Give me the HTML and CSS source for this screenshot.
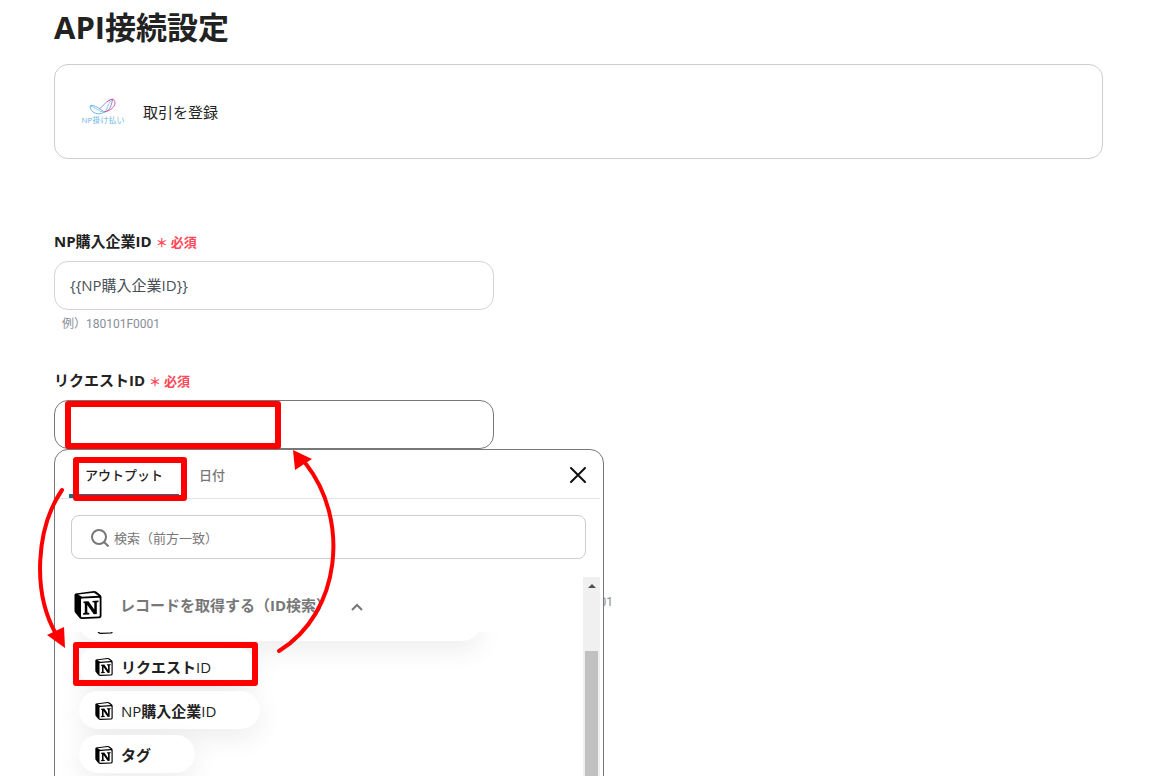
FILE: index.html
```html
<!DOCTYPE html>
<html lang="ja">
<head>
    <meta charset="UTF-8">
    <meta name="viewport" content="width=device-width, initial-scale=1.0">
    <title>API接続設定</title>
    <link rel="stylesheet" href="styles.css">
</head>
<body>
    <svg class="symbols" aria-hidden="true">
        <symbol id="notion" viewBox="0 0 28 30">
            <path d="M1.5 3.5 L20 1 Q21.500 1 22.500 1.700 L26.500 5 Q27.500 6 27.500 7 V26 Q27.500 28 25.500 28.200 L8 29 Q6.500 29 5.500 28 L1.500 23 Q.5 22 .5 20.500 V5 Q.5 4 1.500 3.500 Z"/>
            <path fill="#fff" d="M4 4.500 L20 2.700 L24.500 5.700 L8 6.800 Z M7 9.500 Q7 8.700 8 8.600 L24.800 7.700 Q25.700 7.700 25.700 8.600 V25.400 Q25.700 26.400 24.700 26.500 L8 27.200 Q7 27.200 7 26.200 Z"/>
            <path d="M9.500 11.500 L14.500 11.200 L20.300 19.500 V12.600 L18.500 12.300 V10.900 L24.500 10.600 V12 L22.800 12.500 V24 L19.800 24.300 L13.300 15 V22.500 L15.300 23 V24.400 L9 24.800 V23.400 L10.800 22.800 V13.300 L9.500 13 Z"/>
        </symbol>
    </svg>

    <main class="page">
        <h1>API接続設定</h1>

        <section class="action-card">
            <div class="logo">
                <svg class="logo-mark" viewBox="0 0 28 17" aria-hidden="true">
                    <g fill="none" stroke-width="1">
                        <path stroke="#6db3e3" d="M1 8 C3 6 9 9 15 14 C10 18 1 15 1 8 Z"/>
                        <path stroke="#8bcdf0" d="M1 8 C7 9 9 14 15 14 C19 13 17 6 24 1"/>
                        <path stroke="#9a8bd0" d="M10 11 C15 8 17 2 24 1 C22 6 22 13 15 14"/>
                        <path stroke="#dc5aa5" d="M18 4 C21 1 26 0 26 5 C26 9 21 13 15 14"/>
                    </g>
                </svg>
                <span class="logo-text">NP掛け払い</span>
            </div>
            <p>取引を登録</p>
        </section>

        <form class="fields">
            <div class="field">
                <label for="companyId">NP購入企業ID <span class="required"><span class="star">＊</span>必須</span></label>
                <input type="text" class="text-input" id="companyId" value="{{NP購入企業ID}}">
                <p class="hint">例）180101F0001</p>
            </div>

            <div class="field">
                <label for="requestId">リクエストID <span class="required"><span class="star">＊</span>必須</span></label>
                <div class="picker">
                    <input type="text" class="text-input focused" id="requestId">

                    <div class="panel">
                        <div class="panel-head">
                            <button type="button" class="tab active">アウトプット</button>
                            <button type="button" class="tab">日付</button>
                            <button type="button" class="close" aria-label="閉じる">
                                <svg viewBox="0 0 16 16" aria-hidden="true"><path d="M1 1 L15 15 M15 1 L1 15"/></svg>
                            </button>
                        </div>

                        <div class="search">
                            <svg viewBox="0 0 18 18" aria-hidden="true"><circle cx="8" cy="8" r="7"/><path d="M13 13 L17.500 17.500"/></svg>
                            <input type="search" aria-label="検索" placeholder="検索（前方一致）">
                        </div>

                        <div class="results">
                            <div class="list">
                                <button type="button" class="group">
                                    <svg class="group-icon" aria-hidden="true"><use href="#notion"/></svg>
                                    レコードを取得する（ID検索）
                                    <svg class="chevron" viewBox="0 0 12 8" aria-hidden="true"><path d="M1 7 L6 2 L11 7"/></svg>
                                </button>
                                <div class="items">
                                    <div class="item item-wide"><svg aria-hidden="true"><use href="#notion"/></svg></div>
                                    <button type="button" class="item"><svg aria-hidden="true"><use href="#notion"/></svg><span><b>リクエスト</b>ID</span></button>
                                    <button type="button" class="item"><svg aria-hidden="true"><use href="#notion"/></svg><span>NP<b>購入企業</b>ID</span></button>
                                    <button type="button" class="item"><svg aria-hidden="true"><use href="#notion"/></svg><span><b>タグ</b></span></button>
                                </div>
                            </div>
                            <div class="scrollbar">
                                <div class="scroll-up"></div>
                                <div class="scroll-thumb"></div>
                            </div>
                        </div>
                    </div>
                </div>
            </div>

            <div class="field field-behind">
                <p class="hint">01</p>
            </div>
        </form>

        <svg class="marks" width="400" height="776" aria-hidden="true">
            <g class="mark-line">
                <rect x="68" y="404" width="210" height="42"/>
                <rect x="76" y="460" width="108" height="38"/>
                <rect x="76" y="645" width="179" height="38"/>
            </g>
            <g class="mark-curve">
                <path d="M62 490 C36 528 32 592 56 634"/>
                <path d="M279 651 C341 613 350 520 306 464"/>
            </g>
            <path class="mark-head" d="M65 648 L47 635 L64 627 Z M293 450 L312 459 L295 470 Z"/>
        </svg>
    </main>
</body>
</html>
```
FILE: styles.css
```css
* {
    margin: 0;
    padding: 0;
    box-sizing: border-box;
}

body, button, input {
    font-family: "Open Sans", "Noto Sans CJK JP", sans-serif;
    font-size: 15px;
    color: #222;
}

button {
    border: none;
    background: none;
    cursor: pointer;
}

.symbols {
    display: none;
}

.page {
    position: relative;
    height: 100vh;
    padding: 8px 66px 0 54px;
    overflow: hidden;
}

h1 {
    font-size: 31px;
    line-height: 38px;
    margin-bottom: 18px;
}

/* selected action */
.action-card {
    display: flex;
    align-items: center;
    gap: 16px;
    height: 95px;
    padding: 0 24px;
    border: 1px solid #ccc;
    border-radius: 14px;
}

.logo {
    display: flex;
    flex-direction: column;
    align-items: center;
    width: 48px;
}

.logo-mark {
    width: 28px;
    height: 17px;
}

.logo-text {
    font-size: 8px;
    line-height: 10px;
    color: #6cb7e8;
    white-space: nowrap;
}

/* form */
.fields {
    display: flex;
    flex-direction: column;
    gap: 36px;
    margin-top: 71px;
}

.field {
    min-height: 103px;
}

label {
    display: flex;
    align-items: center;
    gap: 4px;
    height: 20px;
    margin-bottom: 11px;
    font-weight: bold;
}

.required {
    display: flex;
    align-items: center;
    gap: 3px;
    padding-top: 2px;
    font-size: 13px;
    color: #ff4757;
}

.star {
    padding-top: 3px;
    font-size: 12px;
}

.text-input {
    display: block;
    width: 440px;
    height: 49px;
    padding: 0 15px 2px;
    border: 1px solid #ced4da;
    border-radius: 14px;
    background: #fff;
    color: #495057;
    outline: none;
}

.text-input.focused {
    border-color: #777;
}

.hint {
    margin-top: 5px;
    padding-left: 8px;
    font-family: Roboto, "Noto Sans CJK JP", sans-serif;
    font-size: 12px;
    line-height: 18px;
    color: #868e96;
}

.field-behind {
    display: flex;
    align-items: flex-end;
    justify-content: flex-end;
    width: 559px;
}

/* output picker */
.picker {
    position: relative;
}

.panel {
    position: absolute;
    top: 100%;
    left: 0;
    z-index: 1;
    width: 550px;
    padding-right: 3px;
    border: 1px solid #777;
    border-radius: 14px;
    background: #fff;
}

.panel-head {
    display: flex;
    gap: 4px;
    height: 49px;
    padding: 0 14px;
    border-bottom: 1px solid #e3e3e3;
}

.tab {
    padding: 5px 16px 0;
    font-size: 13px;
    font-weight: 500;
    color: #777;
    border-bottom: 4px solid transparent;
}

.tab.active {
    color: #222;
    border-bottom-color: #12708a;
    border-radius: 4px 4px 0 0;
}

.close {
    margin-left: auto;
    padding-top: 6px;
}

.close svg {
    width: 16px;
    height: 16px;
    fill: none;
    stroke: #111;
    stroke-width: 2;
    stroke-linecap: round;
}

.search {
    display: flex;
    align-items: center;
    gap: 5px;
    height: 44px;
    margin: 16px 14px 18px 16px;
    padding: 2px 19px 0;
    border: 1px solid #ccc;
    border-radius: 8px;
}

.search svg {
    width: 18px;
    height: 18px;
    fill: none;
    stroke: #777;
    stroke-width: 2;
}

.search input {
    flex: 1;
    border: none;
    outline: none;
    font-size: 13px;
}

.search input::placeholder {
    color: #777;
}

.results {
    display: flex;
    height: 260px;
}

.list {
    flex: 1;
    overflow: hidden;
}

.group {
    position: relative;
    z-index: 1;
    display: flex;
    align-items: center;
    width: 100%;
    height: 55px;
    padding-left: 19px;
    background: #fff;
    font-weight: bold;
    color: #777;
}

.group-icon {
    width: 28px;
    height: 30px;
    margin-right: 18px;
}

.chevron {
    width: 12px;
    height: 8px;
    margin: 4px 0 0 20px;
    fill: none;
    stroke: #777;
    stroke-width: 2;
}

.items {
    display: flex;
    flex-direction: column;
    align-items: flex-start;
    gap: 6px;
    margin-top: -29px;
    padding-left: 24px;
}

.item {
    display: flex;
    align-items: center;
    gap: 8px;
    height: 38px;
    padding: 0 44px 0 16px;
    border-radius: 19px;
    background: #fff;
    box-shadow: 0 8px 28px rgba(0, 0, 0, 0.08);
}

.item-wide {
    width: 402px;
    padding-top: 4px;
}

.item svg {
    width: 18px;
    height: 20px;
    margin-top: 2px;
}

.scrollbar {
    display: flex;
    flex-direction: column;
    align-items: center;
    width: 17px;
    padding-top: 7px;
    background: #f0f0f0;
}

.scroll-up {
    border: 4px solid transparent;
    border-top-width: 0;
    border-bottom-color: #505050;
}

.scroll-thumb {
    flex: 1;
    width: 13px;
    margin-top: 63px;
    background: #c1c1c1;
}

/* guide marks drawn over the form */
.marks {
    position: absolute;
    top: 0;
    left: 0;
    z-index: 2;
    pointer-events: none;
}

.mark-line, .mark-curve {
    fill: none;
    stroke: #f00;
    stroke-linejoin: round;
    stroke-linecap: round;
}

.mark-line {
    stroke-width: 6;
}

.mark-curve {
    stroke-width: 4;
}

.mark-head {
    fill: #f00;
}
```
